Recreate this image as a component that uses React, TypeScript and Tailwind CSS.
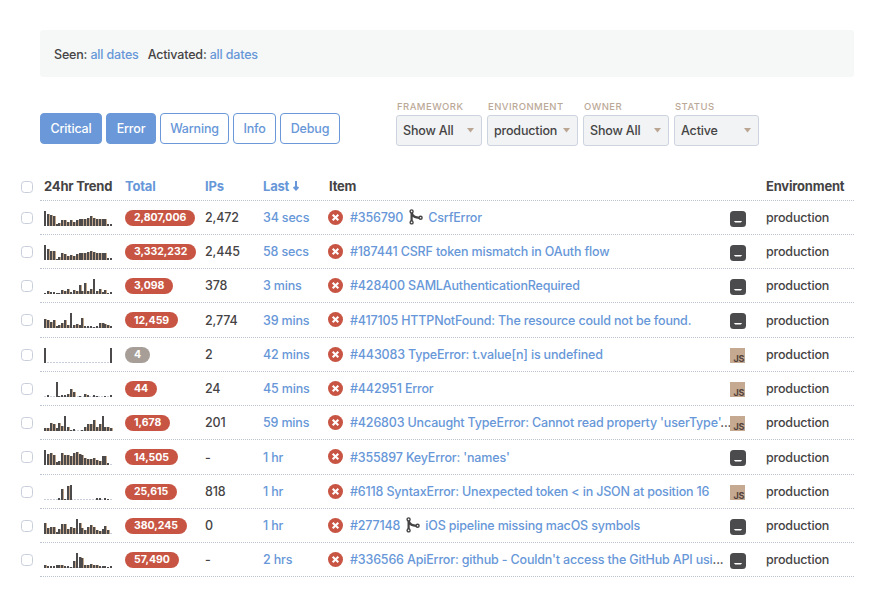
type Platform = 'flask' | 'js';

interface Item {
  trend: number[];
  total: string;
  muted?: boolean;
  ips: string;
  last: string;
  id: string;
  title: string;
  merged?: boolean;
  truncated?: boolean;
  platform: Platform;
}

const items: Item[] = [
  { trend: [15, 12, 11, 10, 2, 3, 6, 6, 4, 6, 4, 6, 7, 7, 7, 8, 10, 8, 7, 7, 7, 7, 2, 2], total: '2,807,006', ips: '2,472', last: '34 secs', id: '#356790', title: 'CsrfError', merged: true, platform: 'flask' },
  { trend: [15, 11, 9, 9, 1, 3, 7, 6, 4, 5, 4, 6, 7, 7, 7, 8, 9, 8, 7, 7, 7, 7, 2, 2], total: '3,332,232', ips: '2,445', last: '58 secs', id: '#187441', title: 'CSRF token mismatch in OAuth flow', platform: 'flask' },
  { trend: [1, 3, 2, 2, 1, 1, 4, 3, 5, 2, 4, 3, 9, 3, 11, 3, 5, 15, 3, 5, 2, 4, 1, 2], total: '3,098', ips: '378', last: '3 mins', id: '#428400', title: 'SAMLAuthenticationRequired', platform: 'flask' },
  { trend: [9, 8, 6, 8, 2, 3, 5, 8, 3, 15, 3, 4, 3, 10, 2, 2, 2, 1, 2, 5, 5, 4, 3, 2], total: '12,459', ips: '2,774', last: '39 mins', id: '#417105', title: 'HTTPNotFound: The resource could not be found.', platform: 'flask' },
  { trend: [15, 0, 0, 0, 0, 0, 0, 0, 0, 0, 0, 0, 0, 0, 0, 0, 0, 0, 0, 0, 0, 0, 0, 15], total: '4', muted: true, ips: '2', last: '42 mins', id: '#443083', title: 'TypeError: t.value[n] is undefined', platform: 'js' },
  { trend: [0, 2, 0, 0, 15, 1, 2, 2, 3, 8, 5, 0, 1, 0, 3, 2, 0, 2, 1, 0, 0, 1, 0, 2], total: '44', ips: '24', last: '45 mins', id: '#442951', title: 'Error', platform: 'js' },
  { trend: [3, 3, 8, 7, 3, 8, 5, 15, 4, 1, 2, 0, 0, 1, 4, 7, 7, 11, 4, 7, 15, 4, 4, 3], total: '1,678', ips: '201', last: '59 mins', id: '#426803', title: "Uncaught TypeError: Cannot read property 'userType'", truncated: true, platform: 'js' },
  { trend: [15, 11, 12, 10, 3, 4, 12, 10, 10, 9, 12, 13, 11, 10, 7, 6, 6, 7, 5, 4, 9, 9, 2, 0], total: '14,505', ips: '-', last: '1 hr', id: '#355897', title: "KeyError: 'names'", platform: 'flask' },
  { trend: [0, 0, 0, 0, 0, 2, 11, 1, 14, 15, 0, 0, 0, 0, 0, 0, 0, 0, 2, 2, 0, 2, 1, 0], total: '25,615', ips: '818', last: '1 hr', id: '#6118', title: 'SyntaxError: Unexpected token < in JSON at position 16', platform: 'js' },
  { trend: [11, 6, 7, 7, 2, 5, 10, 10, 5, 7, 6, 15, 11, 6, 4, 7, 9, 7, 4, 3, 5, 8, 4, 0], total: '380,245', ips: '0', last: '1 hr', id: '#277148', title: 'iOS pipeline missing macOS symbols', merged: true, platform: 'flask' },
  { trend: [3, 2, 2, 2, 3, 3, 3, 2, 2, 1, 7, 15, 11, 10, 3, 3, 4, 3, 3, 2, 2, 2, 1, 2], total: '57,490', ips: '-', last: '2 hrs', id: '#336566', title: "ApiError: github - Couldn't access the GitHub API usi", truncated: true, platform: 'flask' },
];

const levels = [
  { name: 'Critical', active: true, width: 'w-[62px]' },
  { name: 'Error', active: true, width: 'w-[50px]' },
  { name: 'Warning', active: false, width: 'w-[69px]' },
  { name: 'Info', active: false, width: 'w-[43px]' },
  { name: 'Debug', active: false, width: 'w-[60px]' },
];

const filters = [
  { label: 'FRAMEWORK', value: 'Show All', width: 'w-[86px]' },
  { label: 'ENVIRONMENT', value: 'production', width: 'w-[91px]' },
  { label: 'OWNER', value: 'Show All', width: 'w-[86px]' },
  { label: 'STATUS', value: 'Active', width: 'w-[85px]' },
];

const columns = 'grid flex-1 grid-cols-[81px_80px_58px_66px_401px_36px_88px] items-center border-b border-dotted border-[#bcc4d4] pl-1';

function Trend({ values }: { values: number[] }) {
  return (
    <svg width="70" height="16" viewBox="0 0 70 16" className="mt-px" shapeRendering="crispEdges">
      <path d="M0 15.5H68" stroke="#c8cedb" strokeDasharray="2 1" />
      {values.map((v, i) => (
        <g key={i}>
          <rect x={Math.round(i * 2.88)} y={16 - v} width="2" height={v} fill="#4d4a4b" />
          {v > 2 && v < 15 && (
            <rect x={Math.round(i * 2.88) + 2} y={16 - v} width="1" height={v} fill="#c2a78d" />
          )}
        </g>
      ))}
    </svg>
  );
}

function ErrorIcon() {
  return (
    <svg width="15" height="15" viewBox="0 0 15 15" className="mr-[7px] shrink-0">
      <circle cx="7.5" cy="7.5" r="7.5" fill="#c85543" />
      <path d="M4.7 4.7l5.6 5.6M10.3 4.7l-5.6 5.6" stroke="#fff" strokeWidth="2.1" />
    </svg>
  );
}

function MergeIcon() {
  return (
    <svg width="14" height="16" viewBox="0 0 14 16" className="ml-[6px] mr-[5px] shrink-0" fill="none" stroke="#454344">
      <path d="M2.6 3.5v8.5M2.8 4.5c1.2 3 3.7 4.2 7.5 4.3" strokeWidth="2.2" />
      <circle cx="2.6" cy="2.4" r="1.5" fill="#fff" strokeWidth="1.4" />
      <circle cx="2.6" cy="13.4" r="1.5" fill="#fff" strokeWidth="1.4" />
      <circle cx="11.6" cy="8.8" r="1.5" fill="#fff" strokeWidth="1.4" />
    </svg>
  );
}

function PlatformIcon({ platform }: { platform: Platform }) {
  if (platform === 'js') {
    return (
      <span className="mt-[2px] flex h-[15px] w-[15px] items-end justify-end bg-[#c5aa91] pr-px text-[9px] font-bold leading-[9px] tracking-[-0.3px] text-[#53413c]">
        JS
      </span>
    );
  }
  return (
    <svg width="16" height="16" viewBox="0 0 16 16" className="mt-[3px]">
      <rect width="16" height="16" rx="3.5" fill="#4b4a4c" />
      <path d="M3.8 10h8.4l-1.4 1.4H5.2z" fill="#fff" />
    </svg>
  );
}

function Checkbox() {
  return <span className="mr-[7px] block h-3 w-3 shrink-0 rounded-[3.5px] border border-[#c9cedb] bg-white" />;
}

export default function App() {
  return (
    <div className="h-[616px] w-[880px] overflow-hidden bg-white pt-[30px] font-['Inter','Liberation_Sans',sans-serif] text-[12.5px] font-medium tracking-[-0.17px] text-[#454344]">
      <div className="ml-10 flex h-[47px] w-[814px] items-center gap-[9px] rounded-[3px] bg-[#f6f7f7] pl-[14px] pt-[3px]">
        <span>Seen: <a className="text-[#6797d8]">all dates</a></span>
        <span>Activated: <a className="text-[#6797d8]">all dates</a></span>
      </div>

      <div className="ml-10 mt-[23px] flex h-[46px] items-start">
        <div className="mt-[13px] flex w-[356px] gap-1">
          {levels.map((l) => (
            <button
              key={l.name}
              className={`h-[31px] rounded-[4px] border border-[#6a98d8] pt-0.5 tracking-[-0.17px] ${l.width} ${l.active ? 'bg-[#6a98d8] text-white' : 'bg-white text-[#6797d8]'}`}
            >
              {l.name}
            </button>
          ))}
        </div>
        <div className="flex gap-[5px]">
          {filters.map((f) => (
            <div key={f.label} className={f.width}>
              <div className="h-[15px] whitespace-nowrap pl-px text-[9.5px] leading-[13px] tracking-[0.45px] text-[#bba998]">{f.label}</div>
              <div className="flex h-[31px] items-center justify-between rounded-[3px] border border-[#ced4df] bg-[#f1f3f5] pl-[6px] pr-[7px]">
                <span className="pt-0.5">{f.value}</span>
                <svg width="7" height="5" viewBox="0 0 7 5"><path d="M0 0h7L3.5 4.5z" fill="#bba693" /></svg>
              </div>
            </div>
          ))}
        </div>
      </div>

      <div className="mt-[27px] w-[854px] pl-[21px]">
        <div className="flex h-[27.5px] items-center">
          <Checkbox />
          <div className={`${columns} h-full text-[13px] font-bold tracking-[-0.2px]`}>
            <span className="whitespace-nowrap">24hr Trend</span>
            <span className="text-[#6797d8]">Total</span>
            <span className="text-[#6797d8]">IPs</span>
            <span className="flex items-center gap-1 text-[#6797d8]">
              Last
              <svg width="6" height="10" viewBox="0 0 6 10" fill="none" stroke="#6797d8" strokeWidth="2"><path d="M3 0v8M.6 6L3 8.6 5.4 6" /></svg>
            </span>
            <span>Item</span>
            <span />
            <span>Environment</span>
          </div>
        </div>
        {items.map((item) => (
          <div key={item.id} className="flex h-[34.25px] items-center">
            <Checkbox />
            <div className={`${columns} h-full`}>
              <Trend values={item.trend} />
              <span className="flex pt-px">
                <span className={`inline-flex h-4 items-center rounded-full px-[9px] text-[10.5px] font-bold tracking-[-0.03px] text-white ${item.muted ? 'bg-[#a79e98]' : 'bg-[#c85543]'}`}>
                  {item.total}
                </span>
              </span>
              <span className="pt-[2px]">{item.ips}</span>
              <span className="pt-[2px] text-[#6797d8]">{item.last}</span>
              <span className="-ml-px flex items-center whitespace-nowrap text-[#6797d8]">
                <ErrorIcon />
                <span className="pt-[2px]">{item.id}</span>
                {item.merged ? <MergeIcon /> : <span>&nbsp;</span>}
                <span className="pt-[2px]">{item.title}{item.truncated && <span className="text-[#454344]">...</span>}</span>
              </span>
              <PlatformIcon platform={item.platform} />
              <span className="pt-[2px]">production</span>
            </div>
          </div>
        ))}
      </div>
    </div>
  );
}
